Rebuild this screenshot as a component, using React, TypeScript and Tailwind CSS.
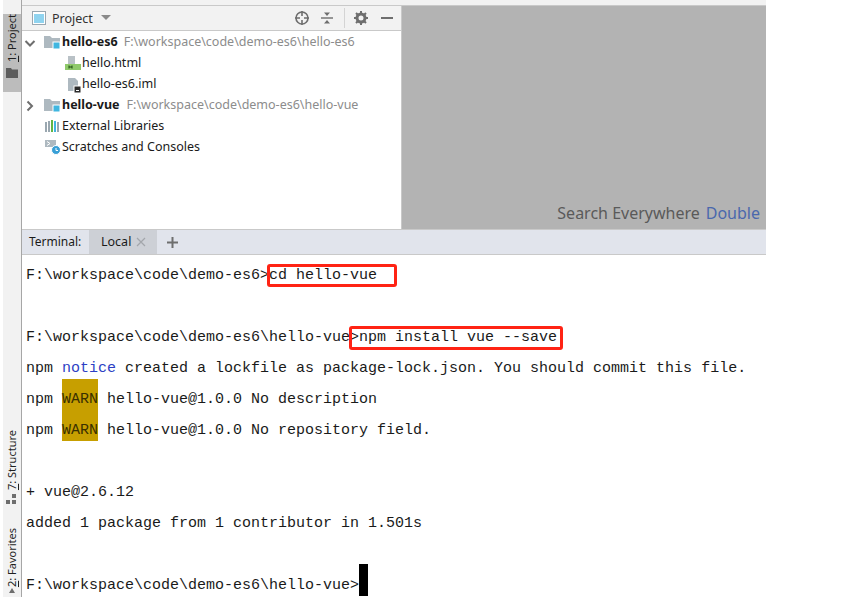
import type { ReactNode } from 'react';

const uiFont = "[font-family:'Noto_Sans','Open_Sans',sans-serif]";

function FolderIcon() {
  return (
    <svg width="19" height="16" viewBox="0 0 19 16" className="shrink-0">
      <path d="M0 1h6l2 2h8v10H0z" fill="#aeb9c0" />
      <rect x="9" y="7" width="7" height="7" fill="#40b6e0" stroke="#fff" strokeWidth="1" />
    </svg>
  );
}

function TreeRow({
  indent,
  icon,
  arrow,
  children,
}: {
  indent: string;
  icon: ReactNode;
  arrow?: 'open' | 'closed';
  children: ReactNode;
}) {
  return (
    <div className={`flex items-center h-[21px] whitespace-nowrap ${indent}`}>
      {arrow && (
        <svg width="12" height="12" viewBox="0 0 12 12" className="shrink-0 mr-[8px]">
          {arrow === 'open' ? (
            <path d="M1.5 4l4.5 4.5L10.5 4" fill="none" stroke="#6e6e6e" strokeWidth="2" />
          ) : (
            <path d="M3.5 1.5L8 6l-4.5 4.5" fill="none" stroke="#6e6e6e" strokeWidth="2" />
          )}
        </svg>
      )}
      {icon}
      {children}
    </div>
  );
}

function SideLabel({ text, mark }: { text: string; mark: string }) {
  return (
    <span className="[writing-mode:vertical-rl] rotate-180 text-[11px] leading-[18px] text-[#1f1f1f]">
      <span className="underline">{mark}</span>
      {text}
    </span>
  );
}

function TermLine({ children }: { children?: ReactNode }) {
  return <div className="relative flex h-[31px] whitespace-pre">{children}</div>;
}

function T({ children, cls = 'text-[#1a1a1a]' }: { children: ReactNode; cls?: string }) {
  return <span className={`h-[31px] leading-[42px] ${cls}`}>{children}</span>;
}

function Warn() {
  return <T cls="bg-[#c79f00] text-[#3a3000]">WARN</T>;
}

export default function App() {
  return (
    <div className={`w-[860px] h-[597px] overflow-hidden bg-white flex pl-[3px] pr-[94px] ${uiFont}`}>
      {/* left tool strip */}
      <div className="w-[19px] shrink-0 bg-[#f2f2f2] border-r border-[#a6a6a6] flex flex-col pt-[6px] pb-[3px]">
        <div className="mt-[8px] h-[78px] bg-[#bcbcbc] flex flex-col items-center">
          <SideLabel mark="1" text=": Project" />
          <svg width="12" height="10" viewBox="0 0 12 10" className="mt-[6px]">
            <path d="M0 0h5l1 1.5h6V10H0z" fill="#5c5c5c" />
          </svg>
        </div>
        <div className="mt-auto flex flex-col items-center">
          <SideLabel mark="7" text=": Structure" />
          <svg width="12" height="12" viewBox="0 0 12 12" className="mt-[3px]">
            <rect x="0" y="7" width="4" height="4" fill="#6e6e6e" />
            <rect x="6" y="7" width="4" height="4" fill="#6e6e6e" />
            <rect x="6" y="1" width="4" height="4" fill="#6e6e6e" />
          </svg>
          <div className="mt-[23px] flex">
            <SideLabel mark="2" text=": Favorites" />
          </div>
          <svg width="12" height="6" viewBox="0 0 12 6" className="mt-px">
            <path d="M6 0l3 5H3z" fill="#6e6e6e" />
          </svg>
        </div>
      </div>

      {/* main column */}
      <div className="flex-1 flex flex-col min-w-0">
        <div className="h-[5px] bg-[#f2f2f2]" />
        <div className="h-[224px] flex border-t border-[#c9c9c9]">
          {/* project panel */}
          <div className="w-[380px] shrink-0 flex flex-col border-r border-[#c9c9c9]">
            <div className="h-[25px] bg-[#f2f2f2] border-b border-[#c9c9c9] flex items-center pl-[10px] pr-[8px] text-[12.5px] text-[#333]">
              <svg width="14" height="14" viewBox="0 0 14 14">
                <rect x="0.5" y="0.5" width="13" height="13" fill="#fff" stroke="#9aa7b0" />
                <rect x="2" y="3" width="10" height="9" fill="#8fd3ef" />
              </svg>
              <span className="ml-[6px] pt-[2px]">Project</span>
              <svg width="10" height="6" viewBox="0 0 10 6" className="ml-[8px]">
                <path d="M0 0h10L5 5z" fill="#8a8a8a" />
              </svg>
              <svg width="16" height="16" viewBox="0 0 16 16" className="ml-auto">
                <circle cx="8" cy="8" r="6" fill="none" stroke="#6e6e6e" strokeWidth="1.6" />
                <path d="M8 1v5M8 10v5M1 8h5M10 8h5" stroke="#6e6e6e" strokeWidth="1.6" />
              </svg>
              <svg width="14" height="14" viewBox="0 0 14 14" className="ml-[10px]">
                <path d="M1 7h12" stroke="#6e6e6e" strokeWidth="1.4" />
                <path d="M7 5L4 1.5h6zM7 9l-3 3.5h6z" fill="#6e6e6e" />
              </svg>
              <div className="w-px h-[20px] bg-[#d4d4d4] ml-[10px]" />
              <svg width="14" height="14" viewBox="0 0 14 14" className="ml-[9px]">
                <circle cx="7" cy="7" r="4" fill="none" stroke="#6e6e6e" strokeWidth="3" />
                <path d="M7 0v3M7 11v3M0 7h3M11 7h3M2 2l2 2M10 10l2 2M12 2l-2 2M4 10l-2 2" stroke="#6e6e6e" strokeWidth="2" />
              </svg>
              <div className="w-[12px] h-[2px] bg-[#6e6e6e] ml-[13px]" />
            </div>
            <div className="flex-1 bg-white pt-px text-[12.5px] text-[#1a1a1a]">
              <TreeRow indent="pl-[2px]" arrow="open" icon={<FolderIcon />}>
                <b className="ml-[-1px] font-bold">hello-es6</b>
                <span className="ml-[6px] text-[12.5px] text-[#8c8c8c]">F:\workspace\code\demo-es6\hello-es6</span>
              </TreeRow>
              <TreeRow
                indent="pl-[43px]"
                icon={
                  <svg width="17" height="16" viewBox="0 0 17 16" className="shrink-0">
                    <path d="M3 0h7v9H3z" fill="#b9c1c6" />
                    <rect x="0" y="8" width="16" height="6" fill="#8fc96b" />
                    <path d="M4 9.5v3M7 9.5v3M4 11h3" stroke="#1f4d12" strokeWidth="1" />
                  </svg>
                }
              >
                hello.html
              </TreeRow>
              <TreeRow
                indent="pl-[45px]"
                icon={
                  <svg width="15" height="16" viewBox="0 0 15 16" className="shrink-0">
                    <path d="M1 1h7l3 3v10H1z" fill="#aeb9c0" />
                    <rect x="7" y="9" width="7" height="7" fill="#2b2b2b" stroke="#fff" />
                    <rect x="9" y="13" width="3" height="1" fill="#fff" />
                  </svg>
                }
              >
                hello-es6.iml
              </TreeRow>
              <TreeRow indent="pl-[2px]" arrow="closed" icon={<FolderIcon />}>
                <b className="ml-[-1px] font-bold">hello-vue</b>
                <span className="ml-[7px] text-[12.5px] text-[#8c8c8c]">F:\workspace\code\demo-es6\hello-vue</span>
              </TreeRow>
              <TreeRow
                indent="pl-[23px]"
                icon={
                  <svg width="15" height="14" viewBox="0 0 15 14" className="shrink-0 mr-[2px]">
                    <rect x="0" y="2" width="2" height="10" fill="#9aa7b0" />
                    <rect x="3" y="1" width="2" height="11" fill="#9aa7b0" />
                    <rect x="6" y="0" width="2" height="12" fill="#62b543" />
                    <rect x="9" y="1" width="2" height="11" fill="#40b6e0" />
                    <rect x="12" y="2" width="2" height="10" fill="#9aa7b0" />
                  </svg>
                }
              >
                External Libraries
              </TreeRow>
              <TreeRow
                indent="pl-[23px]"
                icon={
                  <svg width="16" height="16" viewBox="0 0 16 16" className="shrink-0 mr-[1px]">
                    <path d="M0 0h11v7H0z" fill="#aeb9c0" />
                    <path d="M2 1.5L5 3.5L2 5.5" fill="none" stroke="#fff" />
                    <circle cx="11" cy="10" r="4.5" fill="#389fd6" stroke="#fff" />
                    <path d="M11 8v2.5h2" fill="none" stroke="#fff" />
                  </svg>
                }
              >
                Scratches and Consoles
              </TreeRow>
            </div>
          </div>
          {/* empty editor */}
          <div className="flex-1 bg-[#b3b3b3] overflow-hidden flex items-end justify-end pr-[6px] pb-[4px] whitespace-nowrap text-[16px] leading-[24px] text-[#5a5a5a]">
            <span>Search Everywhere</span>
            <span className="ml-[6px] text-[#4a68ad]">Double</span>
          </div>
        </div>

        {/* terminal tabs */}
        <div className="h-[26px] bg-[#e1e4ec] border-y border-[#c9c9c9] flex items-stretch text-[12.5px] text-[#1a1a1a]">
          <span className="flex items-center pl-[7px] w-[67px] text-[12px]">Terminal:</span>
          <span className="flex items-center w-[68px] bg-[#cdd0d6] pl-[12px]">
            Local
            <svg width="10" height="10" viewBox="0 0 10 10" className="ml-[5px]">
              <path d="M1 1l8 8M9 1l-8 8" stroke="#a3a6ab" strokeWidth="1.2" />
            </svg>
          </span>
          <svg width="11" height="11" viewBox="0 0 11 11" className="ml-[10px] self-center">
            <path d="M5.5 0v11M0 5.5h11" stroke="#6e6e6e" strokeWidth="2" />
          </svg>
        </div>

        {/* terminal output */}
        <div className="flex-1 bg-white pl-[4px] text-[15px] [font-family:'Liberation_Mono',monospace]">
          <TermLine>
            <T>{'F:\\workspace\\code\\demo-es6>cd hello-vue'}</T>
            <span className="absolute left-[241px] top-[9px] w-[130px] h-[23px] border-[3px] border-[#ff2314] rounded-[3px]" />
          </TermLine>
          <TermLine />
          <TermLine>
            <T>{'F:\\workspace\\code\\demo-es6\\hello-vue>npm install vue --save'}</T>
            <span className="absolute left-[323px] top-[9px] w-[214px] h-[24px] border-[3px] border-[#ff2314] rounded-[3px]" />
          </TermLine>
          <TermLine>
            <T>npm </T>
            <T cls="text-[#2d3fc4]">notice</T>
            <T> created a lockfile as package-lock.json. You should commit this file.</T>
          </TermLine>
          <TermLine>
            <T>npm </T>
            <Warn />
            <T> hello-vue@1.0.0 No description</T>
          </TermLine>
          <TermLine>
            <T>npm </T>
            <Warn />
            <T> hello-vue@1.0.0 No repository field.</T>
          </TermLine>
          <TermLine />
          <TermLine>
            <T>+ vue@2.6.12</T>
          </TermLine>
          <TermLine>
            <T>added 1 package from 1 contributor in 1.501s</T>
          </TermLine>
          <TermLine />
          <TermLine>
            <T>{'F:\\workspace\\code\\demo-es6\\hello-vue>'}</T>
            <span className="w-[9px] h-[32px] mt-[-1px] bg-black" />
          </TermLine>
        </div>
      </div>
    </div>
  );
}
